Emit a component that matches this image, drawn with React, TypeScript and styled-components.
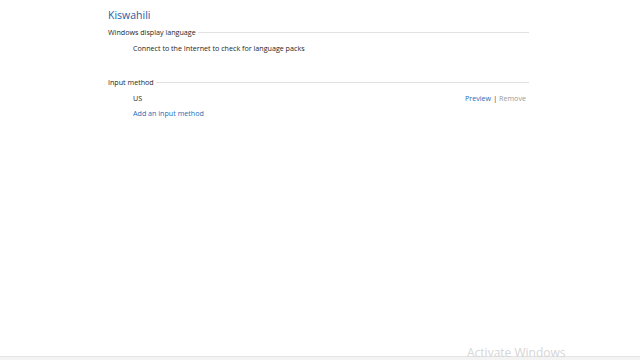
import styled, { createGlobalStyle } from "styled-components";

const GlobalStyle = createGlobalStyle`
  html, body {
    margin: 0;
    padding: 0;
    background: #ffffff;
  }
  body {
    font-family: "Open Sans", "Noto Sans", sans-serif;
  }
`;

export default function App() {
  return (
    <>
      <GlobalStyle />
      <PageStyled>
        <ContentStyled>
          <TitleStyled>Kiswahili</TitleStyled>

          <SectionStyled>
            <SectionHeaderStyled>
              <span>Windows display language</span>
            </SectionHeaderStyled>
            <RowStyled>
              <TextStyled>Connect to the Internet to check for language packs</TextStyled>
            </RowStyled>
          </SectionStyled>

          <SectionStyled spaced>
            <SectionHeaderStyled>
              <span>Input method</span>
            </SectionHeaderStyled>
            <RowStyled>
              <TextStyled>US</TextStyled>
              <ActionsStyled>
                <LinkStyled>Preview</LinkStyled>
                <DividerStyled>|</DividerStyled>
                <LinkStyled disabled>Remove</LinkStyled>
              </ActionsStyled>
            </RowStyled>
            <RowStyled tight>
              <LinkStyled>Add an input method</LinkStyled>
            </RowStyled>
          </SectionStyled>
        </ContentStyled>
        <FooterStyled />
        <WatermarkStyled>Activate Windows</WatermarkStyled>
      </PageStyled>
    </>
  );
}

const PageStyled = styled.div`
  position: relative;
  width: 640px;
  height: 360px;
  display: flex;
  flex-direction: column;
  overflow: hidden;
`;

const ContentStyled = styled.div`
  flex: 1;
  width: 421px;
  padding: 7px 0 0 108px;
`;

const TitleStyled = styled.h1`
  margin: 0 0 3px;
  font-size: 10.5px;
  font-weight: 400;
  line-height: 16px;
  color: #1f5ba6;
`;

const SectionStyled = styled.section<{ spaced?: boolean }>`
  margin-top: ${(p) => (p.spaced ? "22px" : "0")};
`;

const SectionHeaderStyled = styled.div`
  display: flex;
  align-items: center;
  gap: 2px;
  font-size: 7.15px;
  line-height: 12px;
  color: #1e1e1e;

  &::after {
    content: "";
    flex: 1;
    height: 1px;
    background: #e2e2e2;
  }
`;

const RowStyled = styled.div<{ tight?: boolean }>`
  display: flex;
  align-items: center;
  justify-content: space-between;
  padding: ${(p) => (p.tight ? "3px" : "4px")} 3px 0 25px;
  line-height: 12px;
`;

const TextStyled = styled.span`
  font-size: 7.15px;
  color: #1e1e1e;
`;

const ActionsStyled = styled.div`
  display: flex;
  align-items: center;
  gap: 2px;
  font-size: 7.15px;
`;

const LinkStyled = styled.span<{ disabled?: boolean }>`
  font-size: 7.15px;
  color: ${(p) => (p.disabled ? "#9a9a9a" : "#1f6bb8")};
`;

const DividerStyled = styled.span`
  color: #333333;
`;

const FooterStyled = styled.div`
  height: 3px;
  border-top: 1px solid #e4e4e4;
  background: #f3f3f3;
`;

const WatermarkStyled = styled.div`
  position: absolute;
  left: 467px;
  bottom: -1px;
  font-size: 12px;
  line-height: 16px;
  color: #d6d6d6;
`;
